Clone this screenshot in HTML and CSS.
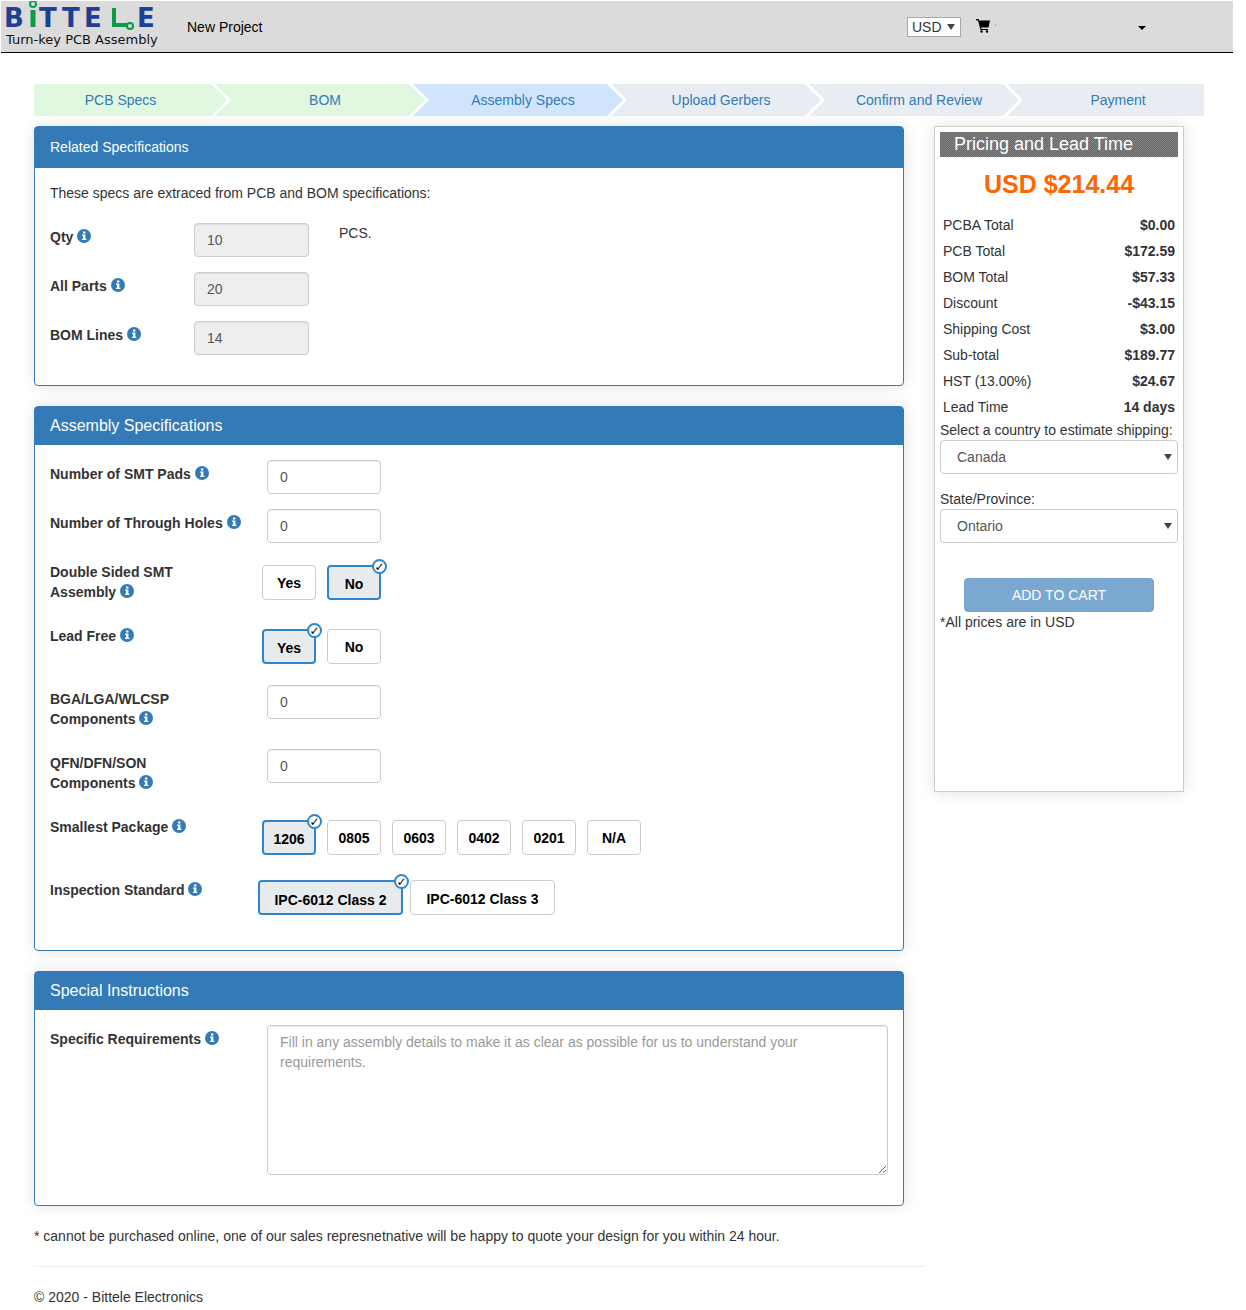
FILE: index.html
```html
<!DOCTYPE html>
<html lang="en">
<head>
<meta charset="utf-8">
<meta name="viewport" content="width=device-width, initial-scale=1">
<title>Assembly Specs - Bittele Electronics</title>
<link rel="stylesheet" href="styles.css">
</head>
<body>
<svg class="defs" aria-hidden="true">
  <symbol id="info" viewBox="0 0 14 14">
    <circle cx="7" cy="7" r="7" fill="#337ab7"/>
    <path d="M6 2.5h2.4v2H6zM5 5.5h3.4v4.3h1V11H5V9.8h1V6.7H5z" fill="#fff"/>
  </symbol>
</svg>
<header class="topbar">
  <a class="logo" href="#" aria-label="Bittele Turn-key PCB Assembly">
    <svg width="160" height="48" viewBox="0 0 160 48">
      <g class="logo-name">
        <text x="3" y="26">B</text>
        <text x="38" y="26">T</text>
        <text x="61" y="26">T</text>
        <text x="83" y="26">E</text>
        <text x="136" y="26">E</text>
      </g>
      <g fill="none" stroke="#0a9a48">
        <path d="M32 26V9" stroke-width="5"/>
        <circle cx="32" cy="3" r="3" stroke-width="2"/>
        <path d="M113 7V24H126" stroke-width="4"/>
        <circle cx="129" cy="25" r="3" stroke-width="2"/>
      </g>
      <text class="logo-tag" x="5" y="43">Turn-key PCB Assembly</text>
    </svg>
  </a>
  <a class="new-project" href="#">New Project</a>
  <div class="tools">
    <span class="select currency">
      <select aria-label="Currency"><option>USD</option></select>
    </span>
    <a class="cart" href="#" aria-label="Cart">
      <svg width="20" height="15" viewBox="0 0 20 15">
        <path d="M0 0h2.500l.8 1.500H14l-1.500 7H5l.5 1.500H12v1H4.500L2 1.500H0z"/>
        <circle cx="5.500" cy="12.500" r="1.200"/><circle cx="11" cy="12.500" r="1.200"/>
        <path d="M19 5h1v2h-1z" fill="#e0a070"/>
      </svg>
    </a>
    <button class="account" type="button" aria-label="Account menu"></button>
  </div>
</header>

<div class="page">
  <nav class="steps">
    <a class="step done" href="#">PCB Specs</a>
    <a class="step done" href="#">BOM</a>
    <a class="step current" href="#">Assembly Specs</a>
    <a class="step" href="#">Upload Gerbers</a>
    <a class="step" href="#">Confirm and Review</a>
    <a class="step" href="#">Payment</a>
  </nav>

  <div class="columns">
    <main>
      <section class="panel related">
        <h2>Related Specifications</h2>
        <div class="panel-body">
          <p>These specs are extraced from PCB and BOM specifications:</p>
          <div class="row"><label for="qty">Qty <svg class="info"><use href="#info"/></svg></label><input class="field" id="qty" value="10" disabled><span class="unit">PCS.</span></div>
          <div class="row"><label for="parts">All Parts <svg class="info"><use href="#info"/></svg></label><input class="field" id="parts" value="20" disabled></div>
          <div class="row"><label for="lines">BOM Lines <svg class="info"><use href="#info"/></svg></label><input class="field" id="lines" value="14" disabled></div>
        </div>
      </section>

      <section class="panel">
        <h2>Assembly Specifications</h2>
        <div class="panel-body">
          <div class="row"><label for="smt">Number of SMT Pads <svg class="info"><use href="#info"/></svg></label><input class="field" id="smt" value="0"></div>
          <div class="row"><label for="holes">Number of Through Holes <svg class="info"><use href="#info"/></svg></label><input class="field" id="holes" value="0"></div>
          <div class="row tall" role="radiogroup" aria-labelledby="l-double">
            <span class="label" id="l-double">Double Sided SMT Assembly <svg class="info"><use href="#info"/></svg></span>
            <div class="options">
              <label class="option"><input type="radio" name="double">Yes</label>
              <label class="option"><input type="radio" name="double" checked>No</label>
            </div>
          </div>
          <div class="row tall" role="radiogroup" aria-labelledby="l-lead">
            <span class="label" id="l-lead">Lead Free <svg class="info"><use href="#info"/></svg></span>
            <div class="options">
              <label class="option"><input type="radio" name="lead" checked>Yes</label>
              <label class="option"><input type="radio" name="lead">No</label>
            </div>
          </div>
          <div class="row tall"><label for="bga">BGA/LGA/WLCSP Components <svg class="info"><use href="#info"/></svg></label><input class="field" id="bga" value="0"></div>
          <div class="row tall"><label for="qfn">QFN/DFN/SON<br>Components <svg class="info"><use href="#info"/></svg></label><input class="field" id="qfn" value="0"></div>
          <div class="row tall" role="radiogroup" aria-labelledby="l-package">
            <span class="label" id="l-package">Smallest Package <svg class="info"><use href="#info"/></svg></span>
            <div class="options">
              <label class="option"><input type="radio" name="package" checked>1206</label>
              <label class="option"><input type="radio" name="package">0805</label>
              <label class="option"><input type="radio" name="package">0603</label>
              <label class="option"><input type="radio" name="package">0402</label>
              <label class="option"><input type="radio" name="package">0201</label>
              <label class="option"><input type="radio" name="package">N/A</label>
            </div>
          </div>
          <div class="row standard" role="radiogroup" aria-labelledby="l-standard">
            <span class="label" id="l-standard">Inspection Standard <svg class="info"><use href="#info"/></svg></span>
            <div class="options wide">
              <label class="option"><input type="radio" name="standard" checked>IPC-6012 Class 2</label>
              <label class="option"><input type="radio" name="standard">IPC-6012 Class 3</label>
            </div>
          </div>
        </div>
      </section>

      <section class="panel">
        <h2>Special Instructions</h2>
        <div class="panel-body">
          <div class="row"><label for="req">Specific Requirements <svg class="info"><use href="#info"/></svg></label><textarea class="field" id="req" placeholder="Fill in any assembly details to make it as clear as possible for us to understand your requirements."></textarea></div>
        </div>
      </section>
      <p class="note">* cannot be purchased online, one of our sales represnetnative will be happy to quote your design for you within 24 hour.</p>
    </main>

    <aside class="pricing">
      <h3>Pricing and Lead Time</h3>
      <p class="total">USD $214.44</p>
      <table>
        <tr><th scope="row">PCBA Total</th><td>$0.00</td></tr>
        <tr><th scope="row">PCB Total</th><td>$172.59</td></tr>
        <tr><th scope="row">BOM Total</th><td>$57.33</td></tr>
        <tr><th scope="row">Discount</th><td>-$43.15</td></tr>
        <tr><th scope="row">Shipping Cost</th><td>$3.00</td></tr>
        <tr><th scope="row">Sub-total</th><td>$189.77</td></tr>
        <tr><th scope="row">HST (13.00%)</th><td>$24.67</td></tr>
        <tr><th scope="row">Lead Time</th><td>14 days</td></tr>
      </table>
      <label for="country">Select a country to estimate shipping:</label>
      <span class="select"><select id="country"><option>Canada</option></select></span>
      <label for="state">State/Province:</label>
      <span class="select"><select id="state"><option>Ontario</option></select></span>
      <button class="add" type="button">ADD TO CART</button>
      <p>*All prices are in USD</p>
    </aside>
  </div>
  <footer>© 2020 - Bittele Electronics</footer>
</div>
</body>
</html>
```
FILE: styles.css
```css
*, *::after { box-sizing: border-box; }

body {
  margin: 1px 13px 0 1px;
  background: #fff;
  color: #333;
  font: 14px/20px "Liberation Sans", Arial, sans-serif;
}

a { color: #337ab7; text-decoration: none; }
p, h2, h3 { margin: 0; font-weight: normal; }
input, select, textarea, button { font: inherit; }
.defs { display: none; }

/* Top bar */
.topbar {
  display: flex;
  align-items: center;
  height: 52px;
  padding-right: 87px;
  border-bottom: 1px solid #000;
  background: #dbdbdb;
}
.logo { align-self: flex-start; height: 48px; }
.logo svg { display: block; }
.logo-name { font: bold 26px "DejaVu Sans", sans-serif; fill: #1d3f94; }
.logo-tag { font: 13px "DejaVu Sans", sans-serif; fill: #111; }
.new-project { margin-left: 26px; color: #000; }
.tools { display: flex; align-items: center; margin-left: auto; }
.cart { display: flex; margin: 0 142px 0 15px; }
.account {
  width: 8px;
  height: 4px;
  margin-top: 2px;
  padding: 0;
  border: solid transparent;
  border-width: 4px 4px 0;
  border-top-color: #000;
  background: none;
}

/* Drop-downs */
.select { display: block; position: relative; }
.select::after {
  content: "";
  position: absolute;
  top: 50%;
  right: 6px;
  margin-top: -3px;
  border: solid transparent;
  border-width: 6px 4px 0;
  border-top-color: #444;
  pointer-events: none;
}
.select select {
  display: block;
  width: 100%;
  height: 34px;
  padding: 0 16px;
  border: 1px solid #ccc;
  border-radius: 4px;
  background: #fff;
  color: #555;
  appearance: none;
}
.currency select {
  width: 54px;
  height: 20px;
  padding: 0 4px;
  border-color: #a9a9a9;
  border-radius: 0;
  color: #333;
  line-height: 18px;
}

/* Progress steps */
.page { padding: 31px 29px 0 33px; }
.steps { display: flex; }
.step {
  flex: 1 1 210px;
  margin-left: -12px;
  padding: 6px 0 6px 10px;
  background: #e8edf3;
  text-align: center;
  clip-path: polygon(0 0, calc(100% - 16px) 0, 100% 50%, calc(100% - 16px) 100%, 0 100%, 16px 50%);
}
.step:first-child {
  flex-basis: 193px;
  margin-left: 0;
  padding: 6px 20px 6px 0;
  clip-path: polygon(0 0, calc(100% - 16px) 0, 100% 50%, calc(100% - 16px) 100%, 0 100%);
}
.step:last-child {
  flex-basis: 197px;
  padding-left: 25px;
  clip-path: polygon(0 0, 100% 0, 100% 100%, 0 100%, 16px 50%);
}
.step.done { background: #e0f8e0; }
.step.current { background: #d0e4fc; }

/* Panels */
.columns {
  display: grid;
  grid-template-columns: minmax(0, 1fr) 250px;
  align-items: start;
  gap: 30px;
  padding: 10px 20px 0 0;
}
.panel {
  margin-bottom: 20px;
  border: 1px solid #337ab7;
  border-radius: 4px;
  box-shadow: 0 0 15px rgba(0, 0, 0, .12);
}
.panel h2 {
  padding: 9px 15px;
  background: #337ab7;
  color: #fff;
  font-size: 16px;
}
.related h2 { padding: 10px 15px 11px; font-size: 14px; }
.panel-body { padding: 15px; }
.related .panel-body p { margin-bottom: 20px; }

.row {
  display: grid;
  grid-template-columns: 193px minmax(0, 1fr);
  column-gap: 24px;
  align-items: start;
  margin-bottom: 15px;
}
.related .row { grid-template-columns: 120px 115px 1fr; }
.unit { margin-left: 6px; }
.row > label, .label { padding-top: 4px; font-weight: bold; }
.label { padding-right: 20px; }
.tall { min-height: 43px; margin-bottom: 20px; }
.tall > label { padding-right: 20px; }
.standard { margin-bottom: 20px; }
.info { width: 14px; height: 14px; vertical-align: -1px; }

.field {
  width: 114px;
  height: 34px;
  padding: 6px 12px;
  border: 1px solid #ccc;
  border-radius: 4px;
  background: #fff;
  color: #555;
  box-shadow: inset 0 1px 1px rgba(0, 0, 0, .075);
}
.related .field { width: 115px; }
.field:disabled { background: #eee; }
textarea.field { display: block; width: 100%; height: 150px; resize: vertical; }
.field::placeholder { color: #999; }

/* Option buttons */
.options { display: flex; gap: 11px; margin-left: -5px; padding-top: 7px; }
.option {
  position: relative;
  width: 54px;
  height: 35px;
  padding-top: 7px;
  border: 1px solid #ccc;
  border-radius: 4px;
  color: #000;
  font-weight: bold;
  text-align: center;
}
.option input { position: absolute; opacity: 0; margin: 0; }
.option:has(:checked) { border: 2px solid #2f86cc; background: #e7ebee; }
.option:has(:checked)::after {
  content: "✓";
  position: absolute;
  top: -8px;
  right: -8px;
  width: 15px;
  height: 15px;
  border: 2px solid #2f86cc;
  border-radius: 50%;
  background: #fff;
  font: bold 12px/12px "DejaVu Sans", sans-serif;
}
.wide { gap: 7px; margin-left: -9px; padding-top: 4px; }
.wide .option { width: 145px; padding-top: 8px; }

/* Pricing */
.pricing {
  min-height: 666px;
  padding: 5px;
  border: 1px solid #ccc;
  box-shadow: 0 0 15px rgba(0, 0, 0, .12);
}
.pricing h3 {
  padding: 0 14px;
  background: repeating-conic-gradient(#686868 0 25%, #828282 0 50%) 0 0 / 2px 2px;
  color: #fff;
  font-size: 18px;
  line-height: 25px;
}
.total {
  padding: 12px 0 13px;
  color: #f60;
  font-size: 25px;
  font-weight: bold;
  line-height: 30px;
  text-align: center;
}
.pricing table { width: 100%; border-collapse: collapse; }
.pricing th { padding: 3px; font-weight: normal; text-align: left; }
.pricing td { padding: 3px; font-weight: bold; text-align: right; }
.pricing label { display: block; }
.pricing .select { margin-bottom: 15px; }
.add {
  display: block;
  width: 80%;
  height: 34px;
  margin: 35px auto 0;
  border: 1px solid #74a3cc;
  border-radius: 4px;
  background: #7ba8d0;
  color: #fff;
}

/* Footer */
footer {
  margin: 20px 279px 0 0;
  padding: 20px 0;
  border-top: 1px solid #eee;
}
```
